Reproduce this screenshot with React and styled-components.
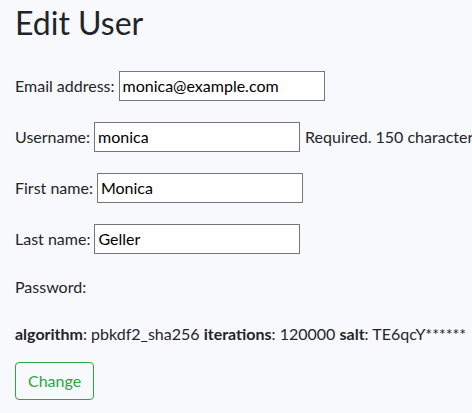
import styled, { createGlobalStyle } from 'styled-components';

const GlobalStyle = createGlobalStyle`
  html, body {
    margin: 0;
    padding: 0;
    background: #f8f9fc;
    overflow: hidden;
  }
  body {
    font-family: Lato, "Open Sans", sans-serif;
    font-size: 16px;
    color: #212529;
  }
`;

function App() {
  return (
    <>
      <GlobalStyle />
      <Page>
        <Title>Edit User</Title>
        <Form>
          {fields.map(field => (
            <Row key={field.name}>
              <Label htmlFor={field.name}>{field.label}:</Label>
              <Input id={field.name} defaultValue={field.value} />
              {field.help && <Help>{field.help}</Help>}
            </Row>
          ))}
          <PasswordLabel>Password:</PasswordLabel>
          <HashInfo>
            <strong>algorithm</strong>: pbkdf2_sha256 <strong>iterations</strong>: 120000{' '}
            <strong>salt</strong>: TE6qcY******
          </HashInfo>
          <ChangeBtn type="button">Change</ChangeBtn>
        </Form>
      </Page>
    </>
  );
}

const fields = [
  { name: 'email', label: 'Email address', value: 'monica@example.com' },
  {
    name: 'username',
    label: 'Username',
    value: 'monica',
    help: 'Required. 150 characters or fewer.',
  },
  { name: 'first_name', label: 'First name', value: 'Monica' },
  { name: 'last_name', label: 'Last name', value: 'Geller' },
];

export default App;

const Page = styled.main`
  padding: 0 15px;
`;

const Title = styled.h1`
  margin: 0;
  padding-top: 4px;
  font-size: 32px;
  font-weight: 400;
  line-height: 38px;
`;

const Form = styled.form`
  display: flex;
  flex-direction: column;
  align-items: flex-start;
  padding-top: 26px;
`;

// one label + input per line
const Row = styled.div`
  display: flex;
  align-items: center;
  height: 35px;
  margin-bottom: 16px;
  white-space: nowrap;
`;

const Label = styled.label`
  margin-right: 4px;
  line-height: 24px;
`;

const Input = styled.input`
  box-sizing: border-box;
  width: 206px;
  height: 30px;
  padding: 1px 3px;
  border: 1px solid #767676;
  background: #fff;
  color: #000;
  font: inherit;
  font-size: 16px;
`;

const Help = styled.span`
  margin-left: 5px;
  line-height: 24px;
`;

const PasswordLabel = styled.div`
  line-height: 24px;
  margin-top: 3px;
  margin-bottom: 23px;
`;

const HashInfo = styled.div`
  line-height: 24px;
  white-space: nowrap;
  margin-bottom: 16px;

  strong {
    font-weight: 700;
  }
`;

const ChangeBtn = styled.button`
  padding: 6px 12px;
  font: inherit;
  font-size: 16px;
  line-height: 24px;
  color: #28a745;
  background: transparent;
  border: 1px solid #28a745;
  border-radius: 4px;
  cursor: pointer;
  &:hover {
    color: #fff;
    background: #28a745;
  }
`;
